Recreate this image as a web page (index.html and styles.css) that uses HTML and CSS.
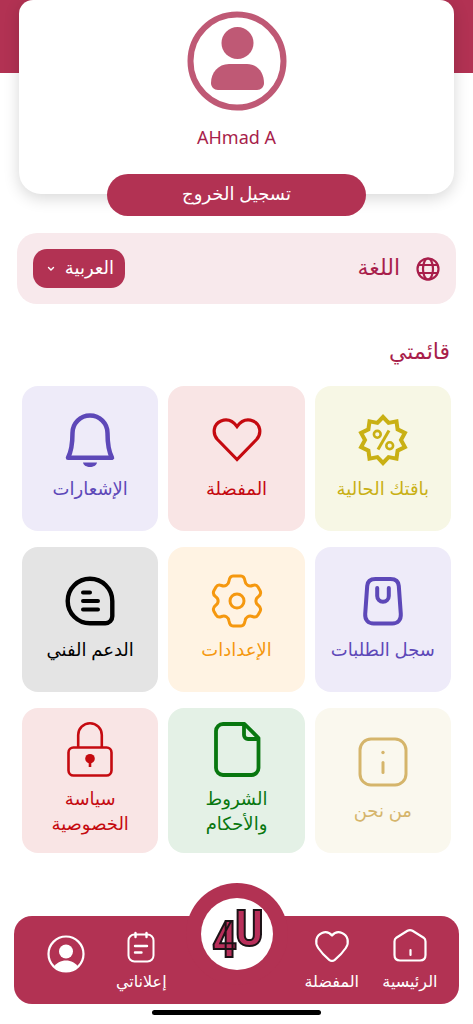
FILE: index.html
```html
<!DOCTYPE html>
<html lang="ar" dir="rtl">
<head>
<meta charset="utf-8">
<meta name="viewport" content="width=device-width, initial-scale=1">
<title>قائمتي</title>
<link rel="stylesheet" href="styles.css">
</head>
<body>
<div class="app">
  <header class="header">
    <div class="profile-card">
      <svg class="avatar" viewBox="0 0 100 100" aria-hidden="true">
        <circle cx="50" cy="50" r="46.5" fill="none" stroke="currentColor" stroke-width="6"/>
        <circle cx="50.500" cy="32" r="16" fill="currentColor"/>
        <path d="M42 53h18c11 0 17 9 17 19 0 4-3 7-7 7H31c-4 0-7-3-7-7 0-10 7-19 18-19z" fill="currentColor"/>
      </svg>
      <h1 class="name" dir="ltr">AHmad A</h1>
    </div>
    <button class="logout" type="button">تسجيل الخروج</button>
  </header>

  <main class="main">
    <section class="language">
      <svg class="globe" viewBox="0 0 24 24" fill="none" stroke="currentColor" stroke-width="2.200" aria-hidden="true">
        <circle cx="12" cy="12" r="10.500"/><ellipse cx="12" cy="12" rx="5" ry="10.500"/>
        <path d="M2.200 8h19.600M2.200 16h19.600"/>
      </svg>
      <label class="language-label" for="lang">اللغة</label>
      <div class="picker">
        <select class="picker-select" id="lang"><option>العربية</option></select>
        <svg class="picker-arrow" viewBox="0 0 8 6" fill="none" stroke="currentColor" stroke-width="1.400" stroke-linecap="round" aria-hidden="true"><path d="M1.500 1.500 4 4l2.500-2.500"/></svg>
      </div>
    </section>

    <h2 class="title">قائمتي</h2>

    <div class="menu">
      <a class="tile tile-olive" href="#package">
        <svg class="icon" viewBox="0 0 54 54" fill="none" stroke="currentColor" aria-hidden="true">
          <path stroke-width="4" d="M27 4 32.600 9.900 40.500 8.400 41.600 16.400 48.900 19.900 45 27 48.900 34.100 41.600 37.600 40.500 45.600 32.600 44.100 27 50 21.400 44.100 13.500 45.600 12.400 37.600 5.100 34.100 9 27 5.100 19.900 12.400 16.400 13.500 8.400 21.400 9.900z"/>
          <circle cx="21.300" cy="21.300" r="3.400" stroke-width="2.600"/><circle cx="33.700" cy="32.700" r="3.400" stroke-width="2.600"/>
          <path stroke-width="3" d="M22 36.500 33 17.500"/>
        </svg>
        <span class="label">باقتك الحالية</span>
      </a>
      <a class="tile tile-red" href="#favorites">
        <svg class="icon" viewBox="0 0 54 54" fill="none" stroke="currentColor" stroke-width="3.200" aria-hidden="true">
          <path d="M27 46.500 7.500 26.500C2 20.500 3.500 11 11 8c6-2.400 11.500-.5 16 5.500C31.500 7.500 37 5.600 43 8c7.500 3 9 12.500 3.500 18.500z"/>
        </svg>
        <span class="label">المفضلة</span>
      </a>
      <a class="tile tile-violet" href="#notifications">
        <svg class="icon" viewBox="0 0 54 54" fill="none" stroke="currentColor" stroke-width="4.500" stroke-linejoin="round" aria-hidden="true">
          <path d="M5 44.800C8.500 38 9.500 32 9.500 20a17.500 17.500 0 0 1 35 0c0 12 1 18 4.500 24.800z"/>
          <path d="M20 49.500h14c-1 6-13 6-14 0z" fill="currentColor" stroke="none"/>
        </svg>
        <span class="label">الإشعارات</span>
      </a>

      <a class="tile tile-violet" href="#orders">
        <svg class="icon" viewBox="0 0 54 54" fill="none" stroke="currentColor" stroke-width="4" stroke-linecap="round" aria-hidden="true">
          <path d="M19.500 5h15c5 0 8 2.500 8.300 7l2 28c.4 6-3 9.500-8.500 9.500H17.700c-5.500 0-8.900-3.500-8.500-9.500l2-28c.3-4.500 3.300-7 8.300-7z"/>
          <path d="M21.200 14v8a5.800 5.800 0 0 0 11.600 0v-8"/>
        </svg>
        <span class="label">سجل الطلبات</span>
      </a>
      <a class="tile tile-orange" href="#settings">
        <svg class="icon" viewBox="0 0 54 54" fill="none" stroke="currentColor" stroke-width="3" stroke-linejoin="round" aria-hidden="true">
          <path d="M23 2h8c3 0 3.500 2 4 5 .5 4 4 6 7.500 4.500 3-1.200 4.300-.5 5.500 1.500l2 3.500c1.500 3 .5 4.500-1.500 6-3.500 2.500-3.500 6.500 0 9 2 1.500 3 3 1.500 6l-2 3.500c-1.200 2-2.500 2.700-5.500 1.500C39 41 35.500 43 35 47c-.5 3-1 5-4 5h-8c-3 0-3.500-2-4-5-.5-4-4-6-7.500-4.500-3 1.200-4.300.5-5.500-1.500l-2-3.500c-1.500-3-.5-4.500 1.500-6 3.500-2.500 3.500-6.500 0-9-2-1.500-3-3-1.500-6L6 13c1.200-2 2.500-2.700 5.500-1.500C15 13 18.500 11 19 7c.5-3 1-5 4-5z"/>
          <circle cx="27" cy="27" r="7"/>
        </svg>
        <span class="label">الإعدادات</span>
      </a>
      <a class="tile tile-black" href="#support">
        <svg class="icon" viewBox="0 0 54 54" fill="none" stroke="currentColor" stroke-width="4.400" stroke-linecap="round" aria-hidden="true">
          <path d="M27 4.700A22.300 22.300 0 0 1 49.300 27v15.300a7 7 0 0 1-7 7H27a22.300 22.300 0 0 1 0-44.600z"/>
          <path stroke-width="4" d="M20 18.500h7M20 27h15M20 35.500h15"/>
        </svg>
        <span class="label">الدعم الفني</span>
      </a>

      <a class="tile tile-sand" href="#about">
        <svg class="icon" viewBox="0 0 54 54" fill="none" stroke="currentColor" stroke-width="3" stroke-linecap="round" aria-hidden="true">
          <rect x="4" y="4" width="46" height="46" rx="11"/>
          <circle cx="27" cy="17.500" r="1.700" fill="currentColor" stroke="none"/><path d="M27 27.500v10"/>
        </svg>
        <span class="label">من نحن</span>
      </a>
      <a class="tile tile-green" href="#terms">
        <svg class="icon" viewBox="0 0 54 54" fill="none" stroke="currentColor" stroke-width="3.800" stroke-linejoin="round" aria-hidden="true">
          <path d="M13 1h21.500l14 14v30a7 7 0 0 1-7 7H13a7 7 0 0 1-7-7V8a7 7 0 0 1 7-7z"/>
          <path d="M34 1v11a4 4 0 0 0 4 4h10"/>
        </svg>
        <span class="label">الشروط<br>والأحكام</span>
      </a>
      <a class="tile tile-red" href="#privacy">
        <svg class="icon" viewBox="0 0 54 54" fill="none" stroke="currentColor" stroke-width="2.600" aria-hidden="true">
          <rect x="5.500" y="24.500" width="43" height="28" rx="5"/>
          <path d="M15.200 24.500V12a11.800 11.800 0 0 1 23.600 0v12.500"/>
          <circle cx="27" cy="35.700" r="4.800" fill="currentColor" stroke="none"/><path d="M27 36v8"/>
        </svg>
        <span class="label">سياسة<br>الخصوصية</span>
      </a>
    </div>
  </main>

  <footer class="footer">
    <nav class="nav">
      <a class="nav-item" href="#home">
        <svg class="nav-icon" viewBox="0 0 34 34" fill="none" stroke="currentColor" stroke-width="2.200" stroke-linecap="round" stroke-linejoin="round" aria-hidden="true">
          <path d="M14.500 1.800 3.300 8.700C2 9.500 1.500 11 1.500 12.500V26c0 3.500 2 5.500 5.500 5.500h20c3.500 0 5.500-2 5.500-5.500V12.500c0-1.500-.5-3-1.800-3.800L19.500 1.800c-1.800-1-3.200-1-5 0zM17.500 21v5"/>
        </svg>
        <span class="nav-label">الرئيسية</span>
      </a>
      <a class="nav-item" href="#liked">
        <svg class="nav-icon" viewBox="0 0 34 34" fill="none" stroke="currentColor" stroke-width="2.200" stroke-linejoin="round" aria-hidden="true">
          <path d="M17 6.500C14 3 10.500 2.500 7 4 1 6.500-.5 13.500 3.200 19c3 4.500 7 8.500 11 11.800 2 1.600 3.600 1.600 5.600 0 4-3.300 8-7.300 11-11.800C34.500 13.500 33 6.500 27 4c-3.500-1.500-7-1-10 2.500z"/>
        </svg>
        <span class="nav-label">المفضلة</span>
      </a>
      <a class="nav-brand" href="#brand" aria-label="4U">
        <svg class="logo" viewBox="0 0 72 72" direction="ltr" aria-hidden="true">
          <text class="logo-text" x="11" y="59">4<tspan x="34" y="48">U</tspan></text>
        </svg>
      </a>
      <a class="nav-item" href="#ads">
        <svg class="nav-icon" viewBox="0 0 34 34" fill="none" stroke="currentColor" stroke-width="2" stroke-linecap="round" aria-hidden="true">
          <rect x="4.500" y="5.500" width="25" height="27" rx="6"/><path stroke-width="2.400" d="M11.500 4v4M22.500 4v4M11 17h12M11 23.500h6.500"/>
        </svg>
        <span class="nav-label">إعلاناتي</span>
      </a>
      <a class="nav-item" href="#profile" aria-label="profile">
        <svg class="nav-profile" viewBox="0 0 38 38" aria-hidden="true">
          <circle cx="19" cy="19" r="17.500" fill="none" stroke="currentColor" stroke-width="2.200"/>
          <circle cx="19" cy="16.500" r="7" fill="currentColor"/>
          <path d="M7 32c2-4 7-6.500 12-6.500S29 28 31 32c-3.500 3-7.500 4.500-12 4.500S10.500 35 7 32z" fill="currentColor"/>
        </svg>
      </a>
    </nav>
    <div class="home-indicator"></div>
  </footer>
</div>
</body>
</html>
```
FILE: styles.css
```css
:root {
  --brand: #b23253;
  --brand-text: #a81e4b;
}

* {
  box-sizing: border-box;
}

body {
  margin: 0;
  background: #fff;
  font-family: "Noto Sans", "DejaVu Sans", sans-serif;
  color: var(--brand-text);
}

a {
  color: inherit;
  text-decoration: none;
}

svg {
  display: block;
  overflow: visible;
}

.app {
  display: flex;
  flex-direction: column;
  min-height: 100vh;
}

.header {
  display: flex;
  flex-direction: column;
  align-items: center;
  padding: 0 19px;
  background: linear-gradient(var(--brand), var(--brand)) top / 100% 73px no-repeat;
}

.profile-card {
  display: flex;
  flex-direction: column;
  align-items: center;
  align-self: stretch;
  gap: 12px;
  padding: 11px 0 42px;
  background: #fff;
  border-radius: 14px 14px 22px 22px;
  box-shadow: 0 4px 16px rgba(0, 0, 0, 0.16);
}

.avatar {
  width: 100px;
  height: 100px;
  color: #bf5975;
}

.name {
  margin: 0;
  font-size: 18px;
  font-weight: 400;
  line-height: 29px;
}

.logout {
  width: 59.5%;
  height: 42px;
  margin-top: -20px;
  padding: 0 0 4px;
  border: 0;
  border-radius: 21px;
  background: var(--brand);
  color: #fff;
  font: inherit;
  font-size: 18px;
}

.main {
  padding: 17px 17px 0;
}

.language {
  display: flex;
  align-items: center;
  gap: 16px;
  padding: 16px;
  border-radius: 20px;
  background: #f8e9ec;
}

.globe {
  width: 24px;
  height: 24px;
}

.language-label {
  font-size: 22px;
  line-height: 32px;
  padding-bottom: 6px;
}

.picker {
  position: relative;
  margin-right: auto;
  color: #fff;
}

.picker-select {
  display: block;
  appearance: none;
  width: 92px;
  height: 39px;
  padding: 0 11px 4px 24px;
  border: 0;
  border-radius: 14px;
  background: var(--brand);
  color: inherit;
  font: inherit;
  font-size: 18px;
}

.picker-arrow {
  position: absolute;
  left: 14px;
  top: 17px;
  width: 8px;
  height: 6px;
  pointer-events: none;
}

.title {
  margin: 30px 6px 20px;
  font-size: 22px;
  font-weight: 400;
  line-height: 32px;
}

.menu {
  display: grid;
  grid-template-columns: repeat(3, 1fr);
  gap: 16px 10px;
  padding: 0 5px;
}

.tile {
  display: flex;
  flex-direction: column;
  align-items: center;
  justify-content: center;
  gap: 9px;
  min-height: 145px;
  padding-bottom: 3px;
  border-radius: 16px;
  text-align: center;
}

.icon {
  width: 54px;
  height: 54px;
}

.label {
  font-size: 18px;
  line-height: 25px;
}

.tile-olive { background: #f7f7e5; color: #c9b014; }
.tile-red { background: #f9e5e5; color: #c50a10; }
.tile-violet { background: #eeebf9; color: #5d48b8; }
.tile-orange { background: #fff3e3; color: #f5980f; }
.tile-black { background: #e4e4e4; color: #000; }
.tile-sand { background: #faf8ee; color: #d5b56b; }
.tile-green { background: #e4f1e6; color: #08770f; }

.footer {
  display: flex;
  flex-direction: column;
  gap: 6px;
  margin-top: auto;
  padding: 33px 14px 9px;
}

.nav {
  display: grid;
  grid-template-columns: 78fr 78fr 112fr 78fr 72fr;
  min-height: 88px;
  padding: 0 10px 0 16px;
  border-radius: 18px;
  background: var(--brand);
  color: #fff;
}

.nav-item {
  display: flex;
  flex-direction: column;
  align-items: center;
  gap: 6px;
  padding-top: 13px;
}

.nav-icon {
  width: 34px;
  height: 34px;
}

.nav-profile {
  width: 38px;
  height: 38px;
  margin-top: 6px;
}

.nav-label {
  font-size: 16px;
  line-height: 25px;
}

.nav-brand {
  justify-self: center;
  width: 102px;
  height: 102px;
  margin: -33px 0 19px;
  padding: 15px;
  border-radius: 50%;
  background: var(--brand);
}

.logo {
  width: 72px;
  height: 72px;
  border-radius: 50%;
  background: #fff;
}

.logo-text {
  font-family: "Roboto Condensed", "Liberation Sans Narrow", "Liberation Sans", sans-serif;
  font-size: 50px;
  font-weight: 700;
  fill: #b82f5a;
  stroke: #1c1216;
  stroke-width: 2px;
}

.home-indicator {
  align-self: center;
  width: 38%;
  height: 5px;
  border-radius: 3px;
  background: #000;
}
```
